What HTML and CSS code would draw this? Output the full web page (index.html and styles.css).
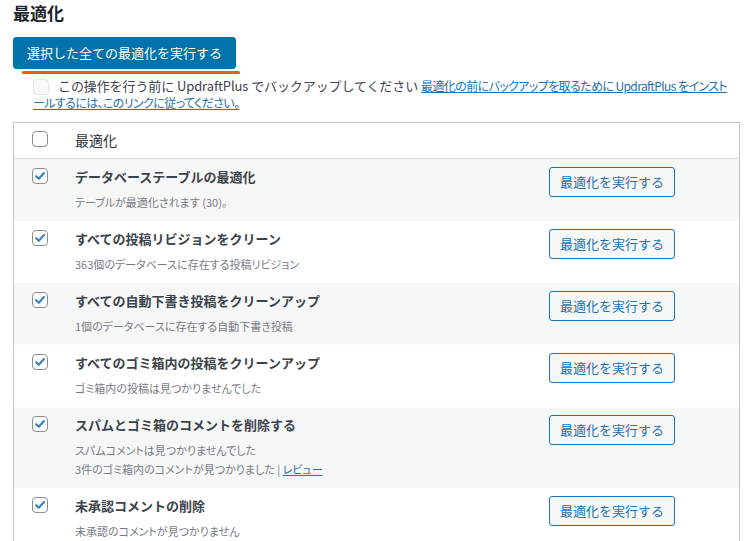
FILE: index.html
```html
<!DOCTYPE html>
<html lang="ja">
<head>
<meta charset="utf-8">
<title>最適化</title>
<link rel="stylesheet" href="styles.css">
</head>
<body>
<div class="wrap">
  <h2 class="title">最適化</h2>
  <button class="btn-primary" type="button">選択した全ての最適化を実行する</button>
  <div class="mark"></div>
  <p class="notice"><span class="cb cb-disabled"></span><span class="notice-text">この操作を行う前に UpdraftPlus でバックアップしてください</span> <a href="#" class="link notice-link">最適化の前にバックアップを取るために UpdraftPlus をインストールするには、このリンクに従ってください。</a></p>

  <div class="table">
    <div class="row head">
      <div class="col-cb"><span class="cb"></span></div>
      <div class="col-main head-label">最適化</div>
    </div>

    <div class="row alt">
      <div class="col-cb"><span class="cb checked"><svg viewBox="0 0 16 16"><path d="M3.6 8.2 L6.6 11.2 L12.6 4.6" /></svg></span></div>
      <div class="col-main">
        <div class="row-title">データベーステーブルの最適化</div>
        <div class="row-desc">テーブルが最適化されます (30)。</div>
      </div>
      <div class="col-btn"><button class="btn" type="button">最適化を実行する</button></div>
    </div>

    <div class="row">
      <div class="col-cb"><span class="cb checked"><svg viewBox="0 0 16 16"><path d="M3.6 8.2 L6.6 11.2 L12.6 4.6" /></svg></span></div>
      <div class="col-main">
        <div class="row-title">すべての投稿リビジョンをクリーン</div>
        <div class="row-desc">363個のデータベースに存在する投稿リビジョン</div>
      </div>
      <div class="col-btn"><button class="btn" type="button">最適化を実行する</button></div>
    </div>

    <div class="row alt">
      <div class="col-cb"><span class="cb checked"><svg viewBox="0 0 16 16"><path d="M3.6 8.2 L6.6 11.2 L12.6 4.6" /></svg></span></div>
      <div class="col-main">
        <div class="row-title">すべての自動下書き投稿をクリーンアップ</div>
        <div class="row-desc">1個のデータベースに存在する自動下書き投稿</div>
      </div>
      <div class="col-btn"><button class="btn" type="button">最適化を実行する</button></div>
    </div>

    <div class="row">
      <div class="col-cb"><span class="cb checked"><svg viewBox="0 0 16 16"><path d="M3.6 8.2 L6.6 11.2 L12.6 4.6" /></svg></span></div>
      <div class="col-main">
        <div class="row-title">すべてのゴミ箱内の投稿をクリーンアップ</div>
        <div class="row-desc">ゴミ箱内の投稿は見つかりませんでした</div>
      </div>
      <div class="col-btn"><button class="btn" type="button">最適化を実行する</button></div>
    </div>

    <div class="row alt">
      <div class="col-cb"><span class="cb checked"><svg viewBox="0 0 16 16"><path d="M3.6 8.2 L6.6 11.2 L12.6 4.6" /></svg></span></div>
      <div class="col-main">
        <div class="row-title">スパムとゴミ箱のコメントを削除する</div>
        <div class="row-desc">スパムコメントは見つかりませんでした</div>
        <div class="row-desc">3件のゴミ箱内のコメントが見つかりました | <a href="#" class="link">レビュー</a></div>
      </div>
      <div class="col-btn"><button class="btn" type="button">最適化を実行する</button></div>
    </div>

    <div class="row">
      <div class="col-cb"><span class="cb checked"><svg viewBox="0 0 16 16"><path d="M3.6 8.2 L6.6 11.2 L12.6 4.6" /></svg></span></div>
      <div class="col-main">
        <div class="row-title">未承認コメントの削除</div>
        <div class="row-desc">未承認のコメントが見つかりません</div>
      </div>
      <div class="col-btn"><button class="btn" type="button">最適化を実行する</button></div>
    </div>
  </div>
</div>
</body>
</html>
```

FILE: styles.css
```css
html, body {
  margin: 0;
  padding: 0;
  background: #ffffff;
}
body {
  font-family: "Noto Sans CJK JP", "Noto Sans", sans-serif;
  font-size: 13px;
  color: #3c434a;
  overflow: hidden;
}
.wrap {
  padding: 0 4px 0 13px;
}
.title {
  margin: 0;
  font-size: 17px;
  line-height: 26px;
  font-weight: 700;
  color: #1d2327;
}
.btn-primary {
  display: block;
  margin-top: 11px;
  height: 32px;
  padding: 0 13px;
  border: 1px solid #0073aa;
  border-radius: 3px;
  background: #0073aa;
  color: #ffffff;
  font-family: inherit;
  font-size: 13px;
  line-height: 30px;
  cursor: pointer;
}
.mark {
  margin: 2px 0 0 9px;
  width: 218px;
  height: 3px;
  border-radius: 2px;
  background: #f45a0c;
}
.notice {
  margin: 4px 0 0 0;
  padding-left: 20px;
  padding-right: 6px;
  font-size: 13px;
  line-height: 15px;
  color: #3c434a;
}
.notice-text {
  letter-spacing: -0.1px;
}
.notice-link {
  font-size: 12px;
  letter-spacing: -0.6px;
  font-feature-settings: "palt";
}
.notice .cb {
  vertical-align: -4px;
  margin-right: 9px;
}
.link {
  color: #2271b1;
  text-decoration: underline;
}
.cb {
  display: inline-block;
  box-sizing: border-box;
  width: 16px;
  height: 16px;
  border: 1px solid #8c8f94;
  border-radius: 4px;
  background: #ffffff;
  position: relative;
}
.cb-disabled {
  border-color: #e4e5e7;
  background: #fafafa;
}
.cb svg {
  position: absolute;
  left: 0;
  top: 0;
  width: 14px;
  height: 14px;
}
.cb svg path {
  fill: none;
  stroke: #3582c4;
  stroke-width: 2.4;
  stroke-linecap: round;
  stroke-linejoin: round;
}
.table {
  margin-top: 12px;
  border: 1px solid #c3c4c7;
  border-bottom: none;
}
.row {
  display: grid;
  grid-template-columns: 61px 1fr 126px;
  padding: 8px 64px 9px 0;
  background: #ffffff;
}
.row.alt {
  background: #f6f7f7;
}
.row.head {
  padding: 8px 0 0 0;
  height: 36px;
  box-sizing: border-box;
  border-bottom: 1px solid #dcdcde;
}
.col-cb {
  padding-left: 18px;
}
.row .col-cb .cb {
  margin-top: 1px;
}
.row.head .col-cb .cb {
  margin-top: 0;
}
.head-label {
  font-size: 14px;
  line-height: 18px;
  color: #2c3338;
}
.row-title {
  font-size: 13px;
  font-weight: 700;
  line-height: 20px;
  color: #3c434a;
  margin-bottom: 6px;
}
.row-desc {
  font-size: 11px;
  line-height: 19px;
  color: #787c82;
  font-feature-settings: "palt";
}
.btn {
  box-sizing: border-box;
  width: 126px;
  height: 30px;
  padding: 0;
  border: 1px solid #2271b1;
  border-radius: 3px;
  background: #f6f7f7;
  color: #2271b1;
  font-family: inherit;
  font-size: 13px;
  line-height: 28px;
  cursor: pointer;
}
```
